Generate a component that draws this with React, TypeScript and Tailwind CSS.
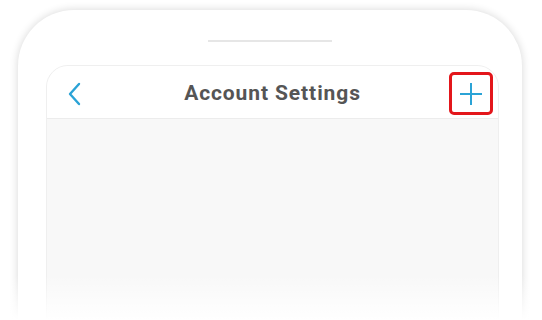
export default function App() {
  return (
    <div className="relative h-[320px] w-[542px] overflow-hidden bg-white" style={{ fontFamily: "Roboto, 'Liberation Sans', sans-serif" }}>
      {/* phone frame */}
      <div className="ml-[18px] mt-[10px] h-[360px] w-[504px] rounded-[56px] bg-white pt-[30px] shadow-[0_0_9px_rgba(0,0,0,0.16)]">
        <div className="mx-auto h-[2px] w-[124px] bg-[#e6e6e6]" />
        {/* screen */}
        <div className="ml-[28px] mr-[23px] mt-[23px] h-[300px] overflow-hidden rounded-t-[22px] border border-[#efefef] bg-[#f8f8f8]">
          <div className="grid h-[53px] grid-cols-[1fr_auto_1fr] items-center border-b border-[#ececec] bg-white px-[5px] pt-[3px]">
            <button className="ml-[15px] flex h-[40px] w-[20px] items-center">
              <svg width="14" height="24" viewBox="0 0 14 24" fill="none">
                <path d="M12 2 L3 12 L12 22" stroke="#2ba3d6" strokeWidth="2.4" strokeLinecap="round" strokeLinejoin="round" />
              </svg>
            </button>
            <h1 className="text-[21px] font-bold tracking-[0.9px] text-[#555555]">Account Settings</h1>
            <button className="flex h-[43px] w-[44px] items-center justify-center justify-self-end rounded-[5px] border-[3px] border-[#e3161b]">
              <svg width="24" height="24" viewBox="0 0 24 24" fill="none">
                <path d="M12 1 V23 M1 12 H23" stroke="#2ba3d6" strokeWidth="2" />
              </svg>
            </button>
          </div>
        </div>
      </div>
      {/* bottom fade */}
      <div className="pointer-events-none absolute bottom-0 left-0 h-[45px] w-full bg-gradient-to-b from-white/0 to-white" />
    </div>
  );
}
